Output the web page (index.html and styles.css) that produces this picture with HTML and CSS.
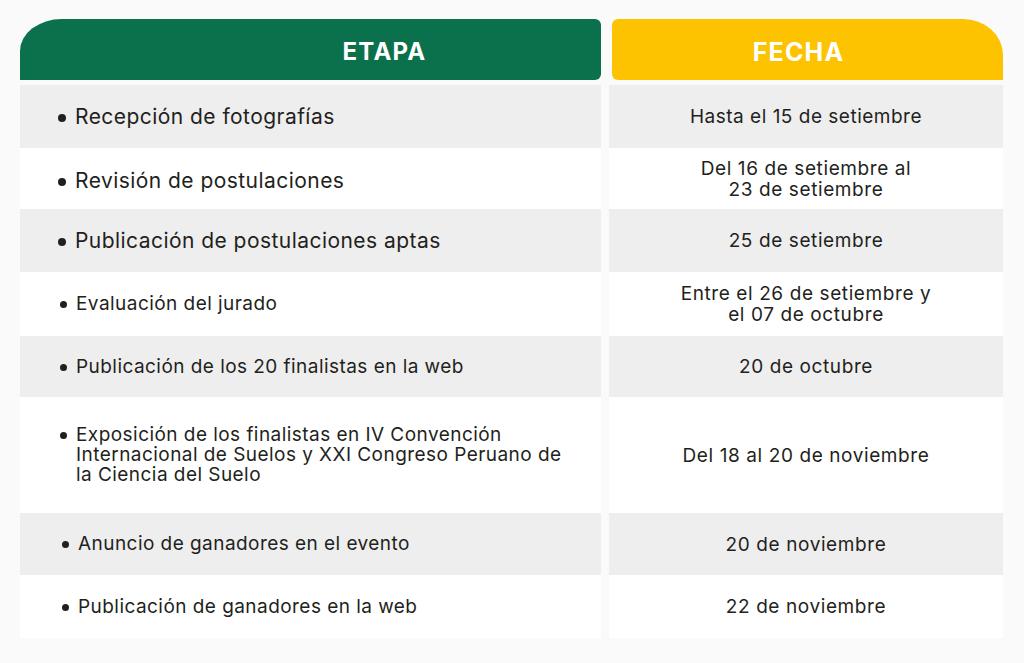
FILE: index.html
```html
<!DOCTYPE html>
<html lang="es">
<head>
<meta charset="utf-8">
<title>Cronograma</title>
<link rel="stylesheet" href="styles.css">
</head>
<body>
<div class="table">
  <div class="head head-etapa">ETAPA</div>
  <div class="head head-fecha">FECHA</div>

  <div class="cell stage gray lg"><div class="label">Recepción de fotografías</div></div>
  <div class="cell date gray big">Hasta el 15 de setiembre</div>

  <div class="cell stage white lg low"><div class="label">Revisión de postulaciones</div></div>
  <div class="cell date white">Del 16 de setiembre al<br>23 de setiembre</div>

  <div class="cell stage gray lg"><div class="label">Publicación de postulaciones aptas</div></div>
  <div class="cell date gray">25 de setiembre</div>

  <div class="cell stage white sm mid"><div class="label">Evaluación del jurado</div></div>
  <div class="cell date white">Entre el 26 de setiembre y<br>el 07 de octubre</div>

  <div class="cell stage gray sm mid"><div class="label">Publicación de los 20 finalistas en la web</div></div>
  <div class="cell date gray">20 de octubre</div>

  <div class="cell stage white sm mid"><div class="label">Exposición de los finalistas en IV Convención Internacional de Suelos y XXI Congreso Peruano de la Ciencia del Suelo</div></div>
  <div class="cell date white">Del 18 al 20 de noviembre</div>

  <div class="cell stage gray sm far"><div class="label">Anuncio de ganadores en el evento</div></div>
  <div class="cell date gray">20 de noviembre</div>

  <div class="cell stage white sm far"><div class="label">Publicación de ganadores en la web</div></div>
  <div class="cell date white">22 de noviembre</div>
</div>
</body>
</html>
```
FILE: styles.css
```css
html, body {
  margin: 0;
  padding: 0;
}
body {
  background: #fafafa;
  font-family: Inter, "Open Sans", sans-serif;
  color: #231f20;
  width: 1024px;
  height: 663px;
  overflow: hidden;
}
.table {
  display: grid;
  grid-template-columns: 581px 394px;
  grid-template-rows: 66px 63px 61px 63px 64px 61px 116px 62px 63px;
  column-gap: 8px;
  margin: 19px 0 0 20px;
  width: 983px;
}
.head {
  height: 61px;
  display: flex;
  align-items: center;
  justify-content: center;
  color: #ffffff;
  font-weight: 700;
  font-size: 24px;
  letter-spacing: 1.2px;
  padding-top: 4px;
  box-sizing: border-box;
}
.head-etapa {
  background: #0b704c;
  border-radius: 42px 6px 6px 0 / 32px 6px 6px 0;
  padding-left: 148px;
}
.head-fecha {
  background: #fdc300;
  border-radius: 6px 40px 0 6px / 6px 36px 0 6px;
  margin-left: 3px;
  padding-right: 18px;
  font-size: 25px;
}
.cell {
  display: flex;
  align-items: center;
}
.gray { background: #eeeeee; }
.white { background: #ffffff; }
.stage {
  padding-left: 38px;
}
.stage.low { padding-top: 4px; }
.stage.mid { padding-left: 40px; }
.stage.far { padding-left: 42px; }
.label {
  display: flex;
  align-items: flex-start;
  gap: 9px;
  max-width: 514px;
}
.label::before {
  content: "";
  flex: none;
  width: 8px;
  height: 8px;
  border-radius: 50%;
  background: #231f20;
  margin-top: var(--dot, 8px);
}
.lg {
  font-size: 21px;
  line-height: 24px;
  letter-spacing: 0.45px;
  --dot: 9px;
}
.sm {
  font-size: 19px;
  line-height: 20px;
  letter-spacing: 0.45px;
  --dot: 7px;
}
.sm .label::before {
  width: 7px;
  height: 7px;
}
.date {
  justify-content: center;
  text-align: center;
  font-size: 19px;
  line-height: 21px;
  letter-spacing: 0.6px;
}
.date.big {
  letter-spacing: 0.5px;
}
```
